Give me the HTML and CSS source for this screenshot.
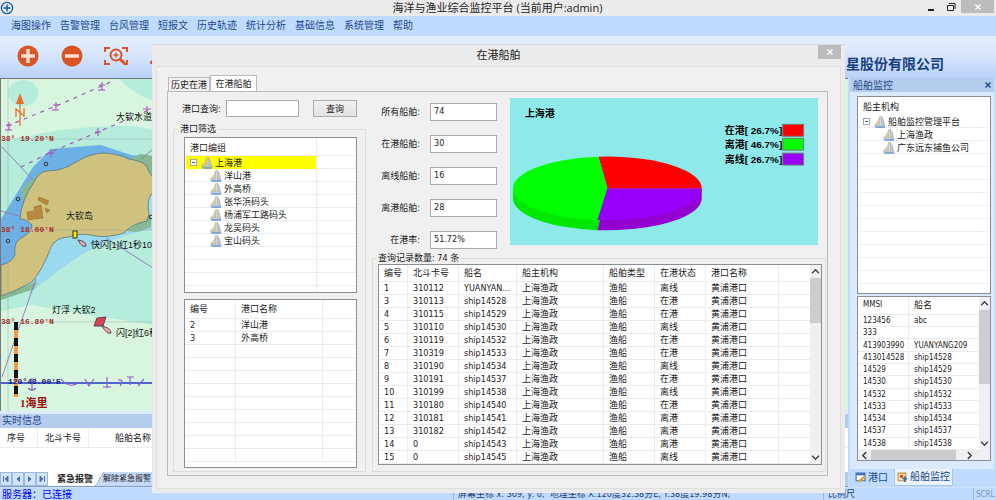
FILE: index.html
```
<!DOCTYPE html>
<html lang="zh-CN">
<head>
<meta charset="UTF-8">
<meta name="viewport" content="width=device-width, initial-scale=1.0">
<title>海洋与渔业综合监控平台</title>
<link rel="stylesheet" href="styles.css">
</head>
<body>

<!-- Shared icons -->
<svg class="defs" width="0" height="0">
  <symbol id="boat" viewBox="0 0 12 12">
    <path d="M 6,0 L 6,9 L 0.500,9 Q 5,5 6,0 Z" fill="#d6cba6" stroke="#b3ac95" stroke-width=".5" />
    <path d="M 7,0 Q 10,3 10.500,9 L 7,9 Z" fill="#c3c9d0" stroke="#9aa3ad" stroke-width=".5" />
    <path d="M 0,9.500 L 12,9.500 L 10.500,12 L 2,12 Z" fill="#86aad3" />
  </symbol>
  <symbol id="cross" viewBox="0 0 8 8">
    <path d="M 1.500,1.500 L 6.500,6.500 M 6.500,1.500 L 1.500,6.500" stroke="currentColor" stroke-width="1.400" />
  </symbol>
  <symbol id="up" viewBox="0 0 8 8">
    <path d="M 1,5.500 L 4,2.500 L 7,5.500" fill="none" stroke="#444" stroke-width="1.300" />
  </symbol>
  <symbol id="down" viewBox="0 0 8 8">
    <path d="M 1,2.500 L 4,5.500 L 7,2.500" fill="none" stroke="#444" stroke-width="1.300" />
  </symbol>
  <symbol id="left" viewBox="0 0 8 8">
    <path d="M 5.500,1 L 2.500,4 L 5.500,7" fill="none" stroke="#444" stroke-width="1.300" />
  </symbol>
  <symbol id="right" viewBox="0 0 8 8">
    <path d="M 2.500,1 L 5.500,4 L 2.500,7" fill="none" stroke="#444" stroke-width="1.300" />
  </symbol>
</svg>

<div class="app">
  <header class="titlebar">
    <svg class="logo" viewBox="0 0 14 14">
      <circle cx="7" cy="7" r="5.600" fill="#e8f1fb" stroke="#1d62b5" stroke-width="1.400" />
      <path d="M 7,3.500 V 10.500 M 3.500,7 H 10.500" stroke="#1d62b5" stroke-width="1.500" />
      <circle cx="7" cy="7" r="1.500" fill="#1d62b5" />
    </svg>
    <h1>海洋与渔业综合监控平台 (当前用户:admin)</h1>
    <div class="win-buttons">
      <button aria-label="最小化"><svg viewBox="0 0 10 10"><path d="M 2,8 H 8" stroke="#222" stroke-width="2" /></svg></button>
      <button aria-label="还原"><svg viewBox="0 0 10 10"><path d="M 1.500,3.500 H 7.500 V 8.500 H 1.500 Z M 3,1.500 H 9 V 7" fill="none" stroke="#222" /></svg></button>
      <button class="close" aria-label="关闭"><svg viewBox="0 0 8 8"><use href="#cross" /></svg></button>
    </div>
  </header>

  <nav class="menu">
    <a href="#">海图操作</a>
    <a href="#">告警管理</a>
    <a href="#">台风管理</a>
    <a href="#">短报文</a>
    <a href="#">历史轨迹</a>
    <a href="#">统计分析</a>
    <a href="#">基础信息</a>
    <a href="#">系统管理</a>
    <a href="#">帮助</a>
  </nav>

  <div class="toolbar">
    <button aria-label="放大">
      <svg viewBox="0 0 24 24"><circle cx="12" cy="12" r="10.500" fill="#db5426" /><path d="M 12,5 V 19 M 5,12 H 19" stroke="#fde3d3" stroke-width="3.400" /></svg>
    </button>
    <button aria-label="缩小">
      <svg viewBox="0 0 24 24"><circle cx="12" cy="12" r="10.500" fill="#db5426" /><path d="M 5,12 H 19" stroke="#fde3d3" stroke-width="3.400" /></svg>
    </button>
    <button aria-label="框选放大">
      <svg viewBox="0 0 24 24" fill="none" stroke="#db5426" stroke-width="2">
        <path d="M 1,8 V 4 H 6 M 18,4 H 23 V 8 M 1,16 V 20 H 6 M 20,20 H 23 V 16" />
        <circle cx="12" cy="11" r="5.500" />
        <path d="M 16,15 L 21,20" stroke-width="3" />
        <path d="M 12,8.500 V 13.500 M 9.500,11 H 14.500" stroke-width="1.500" />
      </svg>
    </button>
    <button aria-label="测距">
      <svg viewBox="0 0 24 24"><path d="M 2,18 L 17,3 L 22,8 L 7,20 L 2,20 Z" fill="#db5426" /></svg>
    </button>
    <strong class="company">星股份有限公司</strong>
  </div>

  <main class="work">
    <section class="chart-side">
      <div class="map">
        <svg width="100%" height="100%">
          <!-- Sea -->
          <rect width="100%" height="100%" fill="#d8f6df" />
          <ellipse cx="22" cy="14" rx="15" ry="13" fill="#b5ecdb" />
          <path d="M 118,0 Q 132,14 152,22 V 0 Z" fill="#b5ecdb" />
          <path d="M 0,64 Q 60,46 130,47 L 152,50 V 246 Q 90,236 30,226 L 0,232 Z" fill="#b5ecdb" />
          <path d="M 28,215 Q 50,196 80,176 Q 110,158 152,150 V 110 L 60,150 L 30,205 Z" fill="#9ad9ee" />
          <path d="M 152,105 V 145 L 144,140 V 115 Z" fill="#a3dfee" />
          <path d="M 0,140 L 32,88 L 50,70 L 100,66 L 130,76 L 152,78 V 100 L 50,150 L 20,195 L 0,218 Z" fill="#6cb0e5" />
          <path d="M 0,215 L 36,203 L 33,210 L 0,221 Z M 20,110 L 42,91 L 34,104 L 22,122 Z M 130,79 L 140,75 L 152,77 V 100 L 142,88 Z M 125,152 L 150,135 V 148 L 136,153 Z" fill="#86b894" />

          <!-- Island -->
          <path d="M 33,103 Q 38,93 46,92 Q 62,92 75,83 Q 90,74 103,74 Q 118,75 128,80 Q 140,82 145,86 Q 148,94 152,98 V 113 Q 145,120 148,135 L 146,142 Q 130,145 123,154 Q 105,159 95,157 Q 80,153 68,158 Q 55,158 50,168 Q 42,190 31,203 Q 15,212 0,217 V 186 Q 10,184 14,176 Q 12,162 22,158 Q 31,153 31,146 Q 24,139 19,140 Q 20,122 33,103 Z" fill="#cfc27f" stroke="#5a7878" stroke-width=".8" />
          <path d="M 38,118 L 48,122 L 46,126 L 37,121 Z M 33,128 L 40,126 L 42,139 L 34,140 Z M 26,133 L 32,132 L 33,140 L 27,141 Z M 44,129 L 49,131 L 46,134 Z" fill="#b98a3c" stroke="#98702b" stroke-width=".6" />

          <!-- Grid and routes -->
          <path d="M 0,60 H 152 M 0,151 H 152 M 0,243 H 152 M 7,0 V 333" stroke="#9ba8a8" stroke-opacity=".5" />
          <path d="M 1,68 L 32,101 M 0,132 L 18,137 M 1,298 L 35,200 M 105,159 L 152,189 M 140,80 L 152,70" fill="none" stroke="#9076b5" stroke-width=".9" />
          <path d="M 6,47 L 55,27 L 112,2 M 20,88 L 50,73 L 97,53 L 150,30" fill="none" stroke="#a15dad" stroke-width="1.200" stroke-dasharray="4 5" />
          <path d="M 5,46 H 11 M 8,43 V 51 M 4,51 H 11 M 52,26 H 58 M 55,23 V 31 M 51,31 H 58 M 98,6 H 104 M 101,3 V 11 M 97,11 H 104 M 47,74 H 53 M 50,70 V 78 M 94,53 H 100 M 97,49 V 57 M 142,30 H 150 M 146,27 V 34" stroke="#b04fc0" stroke-width="1.100" />
          <path d="M 0,304 H 152" stroke="#2233c8" stroke-width="1.500" />
          <path d="M 60,300 Q 68,310 77,304 M 84,300 L 88,307 L 93,300 M 102,308 H 110 M 106,298 V 309 M 117,301 Q 124,300 119,307 M 126,298 H 133 M 129,298 V 306 M 137,307 L 143,300 M 27,309 Q 31,313 35,309 M 31,299 V 311" fill="none" stroke="#8d5dc0" stroke-width="1.200" />

          <!-- Depth marks -->
          <g fill="none" stroke="#333">
            <circle cx="45" cy="85" r="1.800" />
            <circle cx="17" cy="120" r="1.800" />
            <circle cx="7" cy="162" r="1.800" />
            <circle cx="150" cy="138" r="1.800" />
          </g>

          <!-- Buoys -->
          <rect x="72" y="152" width="4" height="7" fill="#ffe600" stroke="#333" />
          <path d="M 77,161 Q 85,162 85,167 Q 81,169 77,161 Z" fill="#eda3b5" stroke="#333" stroke-width=".8" />
          <path d="M 96,239 L 105,238 L 102,247 L 93,247 Z" fill="#d84257" stroke="#333" stroke-width=".8" />
          <path d="M 101,247 Q 110,249 110,254 Q 106,256 101,247 Z" fill="#eda3b5" stroke="#333" stroke-width=".8" />

          <!-- North arrow -->
          <path d="M 19,14 L 23,25 L 15,25 Z" fill="#e8702a" />
          <path d="M 19,25 V 47 M 15,38 V 30 L 23,37 V 29" fill="none" stroke="#e8702a" stroke-width="1.300" />

          <!-- Scale bar -->
          <path d="M 15,243 V 318" stroke="#f09a4a" stroke-width="4" />
          <path d="M 15,243 V 318" stroke="#111" stroke-width="4" stroke-dasharray="8 8" />

          <g class="place">
            <text x="115" y="41">大钦水道</text>
            <text x="65" y="140">大钦岛</text>
            <text x="90" y="169">快闪[1]红1秒10m</text>
            <text x="51" y="234">灯浮 大钦2</text>
            <text x="115" y="257">闪[2]红6秒</text>
          </g>
          <g class="degree">
            <text x="0" y="62">38° 19.20'N</text>
            <text x="0" y="153">38° 18.00'N</text>
            <text x="0" y="245">38° 16.80'N</text>
            <text x="7" y="305" class="lon">120°48.00'E</text>
          </g>
          <text x="19" y="328" class="scale">1海里</text>
        </svg>
      </div>

      <div class="realtime">
        <h2>实时信息</h2>
        <div class="sheet">
          <table>
            <tr><th class="w-38">序号</th><th class="w-52">北斗卡号</th><th class="name">船舶名称</th></tr>
          </table>
        </div>
        <div class="sheet-tabs">
          <button aria-label="第一页"><svg viewBox="0 0 8 8"><path d="M 1.500,1 V 7 M 6,1 L 3,4 L 6,7 Z" fill="#4d76ae" stroke="#4d76ae" /></svg></button>
          <button aria-label="上一页"><svg viewBox="0 0 8 8"><path d="M 5.500,1.500 L 3,4 L 5.500,6.500 Z" fill="#4d76ae" stroke="#4d76ae" /></svg></button>
          <button aria-label="下一页"><svg viewBox="0 0 8 8"><path d="M 2.500,1.500 L 5,4 L 2.500,6.500 Z" fill="#4d76ae" stroke="#4d76ae" /></svg></button>
          <button aria-label="最后页"><svg viewBox="0 0 8 8"><path d="M 6.500,1 V 7 M 2,1 L 5,4 L 2,7 Z" fill="#4d76ae" stroke="#4d76ae" /></svg></button>
          <a href="#" class="current">紧急报警</a>
          <a href="#" class="other">解除紧急报警</a>
        </div>
      </div>
    </section>

    <aside class="dock">
      <div class="dock-body">
        <h2>船舶监控 <svg viewBox="0 0 8 8"><use href="#cross" /></svg></h2>
        <div class="list-box org">
          <p class="tree-head">船主机构</p>
          <ul class="tree">
            <li><span class="toggle"></span><svg><use href="#boat" /></svg>船舶监控管理平台</li>
            <li class="child"><svg><use href="#boat" /></svg>上海渔政</li>
            <li class="child"><svg><use href="#boat" /></svg>广东远东捕鱼公司</li>
          </ul>
        </div>
        <div class="list-box ships">
          <div class="with-scroll">
            <table class="ship-table">
              <thead><tr><th>MMSI</th><th>船名</th></tr></thead>
              <tbody>
                <tr><td>123456</td><td>abc</td></tr>
                <tr><td>333</td><td></td></tr>
                <tr><td>413903990</td><td>YUANYANG209</td></tr>
                <tr><td>413014528</td><td>ship14528</td></tr>
                <tr><td>14529</td><td>ship14529</td></tr>
                <tr><td>14530</td><td>ship14530</td></tr>
                <tr><td>14532</td><td>ship14532</td></tr>
                <tr><td>14533</td><td>ship14533</td></tr>
                <tr><td>14534</td><td>ship14534</td></tr>
                <tr><td>14537</td><td>ship14537</td></tr>
                <tr><td>14538</td><td>ship14538</td></tr>
              </tbody>
            </table>
            <div class="vscroll"><svg><use href="#up" /></svg><i class="thumb long"></i><svg><use href="#down" /></svg></div>
          </div>
          <div class="hscroll"><svg><use href="#left" /></svg><i class="thumb"></i><svg><use href="#right" /></svg></div>
        </div>
      </div>
      <div class="dock-tabs">
        <a href="#"><svg viewBox="0 0 10 10"><path d="M 1,1 H 9 V 8 H 1 Z" fill="#fff" stroke="#3a6fb5" /><path d="M 1,2 H 9" stroke="#3a6fb5" stroke-width="2" /><path d="M 3,9 L 9,4" stroke="#e0a030" stroke-width="2" /></svg>港口</a>
        <a href="#" class="current"><svg viewBox="0 0 10 10"><path d="M 1,1 H 8 V 8 H 1 Z" fill="#ffe9b0" stroke="#d08a30" /><circle cx="4" cy="4" r="1.500" fill="#d9482b" /><path d="M 5,6 H 9 M 7,4 V 9" stroke="#3a6fb5" stroke-width="1.500" /></svg>船舶监控</a>
      </div>
    </aside>
  </main>

  <footer class="status">
    <span class="server">服务器：已连接</span>
    <span class="coords">屏幕坐标 x: 369, y: 0;&nbsp; 地理坐标 X:120度32.38分E, Y:38度19.98分N;</span>
    <span class="ratio">比例尺</span>
    <span class="scrl">SCRL</span>
  </footer>
</div>

<!-- Ships in port window -->
<div class="dialog" role="dialog" aria-labelledby="dialog-title">
  <div class="dialog-title">
    <h2 id="dialog-title">在港船舶</h2>
    <button aria-label="关闭窗口"><svg viewBox="0 0 8 8"><use href="#cross" /></svg></button>
  </div>
  <div class="dialog-body">
    <div class="tabs">
      <button>历史在港</button>
      <button class="active">在港船舶</button>
    </div>
    <div class="tab-panel">
      <div class="filter">
        <form class="search">
          <label for="port">港口查询:</label>
          <input id="port" type="text">
          <button type="button">查询</button>
        </form>
        <fieldset class="filter-group">
          <legend>港口筛选</legend>
          <div class="list-box ports">
            <p class="tree-head">港口编组</p>
            <ul class="tree">
              <li class="selected"><span class="toggle"></span><svg><use href="#boat" /></svg>上海港</li>
              <li class="child"><svg><use href="#boat" /></svg>洋山港</li>
              <li class="child"><svg><use href="#boat" /></svg>外高桥</li>
              <li class="child"><svg><use href="#boat" /></svg>张华浜码头</li>
              <li class="child"><svg><use href="#boat" /></svg>杨浦军工路码头</li>
              <li class="child"><svg><use href="#boat" /></svg>龙吴码头</li>
              <li class="child"><svg><use href="#boat" /></svg>宝山码头</li>
            </ul>
          </div>
          <div class="list-box port-list">
            <table>
              <thead><tr><th class="w-52">编号</th><th class="w-87">港口名称</th><th></th></tr></thead>
              <tbody>
                <tr><td>2</td><td>洋山港</td><td></td></tr>
                <tr><td>3</td><td>外高桥</td><td></td></tr>
                <tr><td></td><td></td><td></td></tr>
                <tr><td></td><td></td><td></td></tr>
                <tr><td></td><td></td><td></td></tr>
                <tr><td></td><td></td><td></td></tr>
                <tr><td></td><td></td><td></td></tr>
                <tr><td></td><td></td><td></td></tr>
                <tr><td></td><td></td><td></td></tr>
                <tr><td></td><td></td><td></td></tr>
                <tr><td></td><td></td><td></td></tr>
              </tbody>
            </table>
          </div>
        </fieldset>
      </div>

      <div class="result">
        <div class="summary">
          <div class="fields">
            <label for="all">所有船舶:</label><input id="all" type="text" value="74">
            <label for="in">在港船舶:</label><input id="in" type="text" value="30">
            <label for="off">离线船舶:</label><input id="off" type="text" value="16">
            <label for="out">离港船舶:</label><input id="out" type="text" value="28">
            <label for="rate">在港率:</label><input id="rate" type="text" value="51.72%">
          </div>
          <div class="pie">
            <svg viewBox="0 0 310 147" preserveAspectRatio="xMinYMin meet">
              <!-- Sides -->
              <path d="M 3,91 V 101 A 95,32 0 0 0 88,133 L 98,91 Z" fill="#00e800" />
              <path d="M 193,91 V 101 A 95,32 0 0 1 98,133 H 88 L 98,91 Z" fill="#9400d0" />
              <!-- Slices -->
              <path d="M 98,91 L 193,91 A 95,32 0 0 0 98,59 L 89,59.100 Z" fill="#f00" />
              <path d="M 98,91 L 89,59.100 A 95,32 0 0 0 3,91 A 95,32 0 0 0 88,122.800 Z" fill="#0f0" />
              <path d="M 98,91 L 88,122.800 L 98,123 A 95,32 0 0 0 193,91 Z" fill="#9600fa" />
              <text x="15" y="19">上海港</text>
              <text x="274" y="36" text-anchor="end">在港[ 26.7%]</text>
              <text x="274" y="50" text-anchor="end">离港[ 46.7%]</text>
              <text x="274" y="65" text-anchor="end">离线[ 26.7%]</text>
              <rect x="274.500" y="26.500" width="21" height="12" fill="#f00" stroke="#777" />
              <rect x="274.500" y="40.500" width="21" height="12" fill="#0f0" stroke="#777" />
              <rect x="274.500" y="55.500" width="21" height="12" fill="#9600fa" stroke="#777" />
            </svg>
          </div>
        </div>

        <fieldset class="records">
          <legend>查询记录数量: 74 条</legend>
          <div class="list-box with-scroll">
            <table>
              <thead>
                <tr><th class="w-29">编号</th><th class="w-52">北斗卡号</th><th class="w-58">船名</th><th class="w-87">船主机构</th><th class="w-52">船舶类型</th><th class="w-52">在港状态</th><th class="w-73">港口名称</th><th></th></tr>
              </thead>
              <tbody>
                <tr><td>1</td><td>310112</td><td>YUANYAN...</td><td>上海渔政</td><td>渔船</td><td>离线</td><td>黄浦港口</td><td></td></tr>
                <tr><td>3</td><td>310113</td><td>ship14528</td><td>上海渔政</td><td>渔船</td><td>在港</td><td>黄浦港口</td><td></td></tr>
                <tr><td>4</td><td>310115</td><td>ship14529</td><td>上海渔政</td><td>渔船</td><td>在港</td><td>黄浦港口</td><td></td></tr>
                <tr><td>5</td><td>310110</td><td>ship14530</td><td>上海渔政</td><td>渔船</td><td>离线</td><td>黄浦港口</td><td></td></tr>
                <tr><td>6</td><td>310119</td><td>ship14532</td><td>上海渔政</td><td>渔船</td><td>在港</td><td>黄浦港口</td><td></td></tr>
                <tr><td>7</td><td>310319</td><td>ship14533</td><td>上海渔政</td><td>渔船</td><td>在港</td><td>黄浦港口</td><td></td></tr>
                <tr><td>8</td><td>310190</td><td>ship14534</td><td>上海渔政</td><td>渔船</td><td>离线</td><td>黄浦港口</td><td></td></tr>
                <tr><td>9</td><td>310191</td><td>ship14537</td><td>上海渔政</td><td>渔船</td><td>在港</td><td>黄浦港口</td><td></td></tr>
                <tr><td>10</td><td>310199</td><td>ship14538</td><td>上海渔政</td><td>渔船</td><td>离线</td><td>黄浦港口</td><td></td></tr>
                <tr><td>11</td><td>310180</td><td>ship14540</td><td>上海渔政</td><td>渔船</td><td>在港</td><td>黄浦港口</td><td></td></tr>
                <tr><td>12</td><td>310181</td><td>ship14541</td><td>上海渔政</td><td>渔船</td><td>离港</td><td>黄浦港口</td><td></td></tr>
                <tr><td>13</td><td>310182</td><td>ship14542</td><td>上海渔政</td><td>渔船</td><td>离港</td><td>黄浦港口</td><td></td></tr>
                <tr><td>14</td><td>0</td><td>ship14543</td><td>上海渔政</td><td>渔船</td><td>离港</td><td>黄浦港口</td><td></td></tr>
                <tr><td>15</td><td>0</td><td>ship14545</td><td>上海渔政</td><td>渔船</td><td>离线</td><td>黄浦港口</td><td></td></tr>
              </tbody>
            </table>
            <div class="vscroll"><svg><use href="#up" /></svg><i class="thumb"></i><svg><use href="#down" /></svg></div>
          </div>
        </fieldset>
      </div>
    </div>
  </div>
</div>

</body>
</html>
```
FILE: styles.css
```
* {
  box-sizing: border-box;
}

body {
  margin: 0;
  position: relative;
  font-family: "DejaVu Sans Condensed", "Noto Sans CJK SC", sans-serif;
  font-size: 9px;
  line-height: 12px;
  color: #222;
}

h1, h2, p, ul {
  margin: 0;
  padding: 0;
  font-weight: normal;
  list-style: none;
}

a {
  color: inherit;
  text-decoration: none;
}

button, input {
  margin: 0;
  padding: 0;
  border: 0;
  background: none;
  font: inherit;
  color: inherit;
}

button svg {
  display: block;
  margin: auto;
}

fieldset {
  margin: 0;
  min-width: 0;
  border: 1px solid #dcdcdc;
}

legend {
  padding: 0 2px;
}

.defs {
  position: absolute;
}

/* Main window */

.app {
  display: flex;
  flex-direction: column;
  height: 100vh;
  background: #bfdbff;
}

.titlebar {
  display: flex;
  align-items: center;
  height: 16px;
  background: #ebebeb;
}

.titlebar .logo {
  width: 14px;
  height: 14px;
}

.titlebar h1 {
  flex: 1;
  padding-left: 60px;
  text-align: center;
  font-family: "Open Sans", "Noto Sans CJK SC", sans-serif;
  font-size: 11px;
  line-height: 16px;
}

.win-buttons {
  display: flex;
  align-self: flex-start;
  padding-right: 2px;
}

.win-buttons button {
  width: 20px;
  height: 13px;
}

.win-buttons svg {
  width: 10px;
  height: 10px;
}

.win-buttons .close {
  width: 33px;
  background: #bcbcbc;
  color: #fff;
}

.win-buttons .close svg {
  width: 8px;
  height: 8px;
}

.menu {
  display: flex;
  gap: 9px;
  height: 20px;
  padding-left: 11px;
  font-size: 10px;
  line-height: 20px;
  color: #1e4a8c;
}

.toolbar {
  display: flex;
  align-items: center;
  gap: 20px;
  height: 42px;
  padding: 0 52px 2px 16px;
  background: linear-gradient(#e3effe, #dce9fd 35%, #b9d2f8);
}

.toolbar button {
  width: 24px;
}

.toolbar svg {
  width: 24px;
  height: 24px;
}

.company {
  margin-left: auto;
  padding-top: 16px;
  font-size: 14px;
  line-height: 20px;
  color: #173f80;
}

.work {
  display: flex;
  flex: 1;
  min-height: 0;
}

.chart-side {
  display: flex;
  flex: 1;
  flex-direction: column;
  min-width: 0;
}

.map {
  flex: 1;
  min-height: 0;
  border-top: 1px solid #777;
  border-left: 1px solid #777;
  overflow: hidden;
}

.map svg {
  display: block;
}

.place {
  font-family: "Liberation Sans", "Noto Sans CJK SC", sans-serif;
  font-size: 9px;
  fill: #111;
}

.degree {
  font-family: "Liberation Mono", monospace;
  font-size: 8px;
  font-weight: bold;
  fill: #a83030;
}

.degree .lon {
  fill: #1c1c88;
}

.scale {
  font-family: "Liberation Serif", "Noto Sans CJK SC", serif;
  font-size: 11px;
  font-weight: bold;
  fill: #a01010;
}

.realtime {
  height: 76px;
  padding-top: 3px;
  display: flex;
  flex-direction: column;
  background: #dceafd;
}

.realtime h2 {
  height: 14px;
  padding-left: 2px;
  font-size: 10px;
  line-height: 13px;
  color: #1e4a8c;
  background: #b5cdec;
}

.sheet {
  flex: 1;
  background: #fff;
}

.realtime th {
  height: 20px;
  padding-left: 7px;
}

.realtime .name {
  padding-left: 26px;
}

.sheet-tabs {
  display: flex;
  height: 15px;
  background: #b5cdec;
  border-bottom: 1px solid #7d9fcf;
}

.sheet-tabs button {
  width: 12px;
  border: 1px solid #9db9df;
  background: #d3e3f8;
}

.sheet-tabs button svg {
  width: 8px;
  height: 8px;
}

.sheet-tabs a {
  line-height: 14px;
}

.sheet-tabs .current {
  width: 46px;
  padding-left: 9px;
  font-weight: bold;
  background: #fff;
  white-space: nowrap;
}

.sheet-tabs .other {
  padding: 0 8px 0 9px;
  font-size: 8px;
  background: linear-gradient(120deg, #fff 8px, #7d9fcf 8px, #c5daf6 9px);
}

.status {
  display: flex;
  height: 13px;
  overflow: hidden;
  line-height: 13px;
  white-space: nowrap;
  color: #1e3a70;
  border-top: 1px solid #cfe1fb;
}

.server {
  width: 453px;
  padding-left: 2px;
  font-size: 10px;
  color: #00f;
}

.coords {
  flex: 1;
  padding-left: 4px;
  border-left: 1px solid #9db9df;
}

.ratio {
  width: 150px;
  padding-left: 4px;
  border-left: 1px solid #9db9df;
}

.scrl {
  width: 23px;
  padding-left: 2px;
  font-size: 8px;
  color: #8096b8;
  border-left: 1px solid #9db9df;
}

/* Lists */

.list-box {
  border: 1px solid #8b8e94;
  background: #fff;
  overflow: hidden;
}

table {
  width: 100%;
  table-layout: fixed;
  border-collapse: separate;
  border-spacing: 0;
}

th, td {
  height: 13px;
  padding: 0 0 0 5px;
  border-right: 1px solid #ececec;
  border-bottom: 1px solid #ececec;
  font-weight: normal;
  text-align: left;
  line-height: 12px;
  white-space: nowrap;
}

th:last-child, td:last-child {
  border-right: 0;
}

.w-29 { width: 29px; }
.w-38 { width: 38px; }
.w-52 { width: 51px; }
.w-58 { width: 58px; }
.w-73 { width: 73px; }
.w-87 { width: 87px; }

.tree-head {
  height: 18px;
  padding: 4px 0 0 5px;
}

.tree li {
  display: flex;
  align-items: center;
  height: 13px;
  padding-left: 5px;
  white-space: nowrap;
}

.tree li.child {
  padding-left: 25px;
}

.tree svg {
  flex: none;
  width: 12px;
  height: 12px;
  margin-right: 2px;
}

.toggle {
  width: 7px;
  height: 7px;
  margin-right: 4px;
  border: 1px solid #9aa9bf;
  background: linear-gradient(#456, #456) center / 3px 1px no-repeat #fff;
}

.with-scroll {
  display: flex;
}

.vscroll, .hscroll {
  display: flex;
  flex: none;
  background: #f0f0f0;
}

.vscroll {
  flex-direction: column;
  width: 11px;
}

.vscroll svg, .hscroll svg {
  width: 9px;
  height: 9px;
  margin: 2px 1px;
}

.vscroll .thumb {
  height: 45px;
  margin-bottom: auto;
  background: #cdcdcd;
}

.vscroll .long {
  height: 74px;
}

/* Right dock */

.dock {
  display: flex;
  flex-direction: column;
  width: 148px;
}

.dock-body {
  display: flex;
  flex: 1;
  flex-direction: column;
  gap: 2px;
  min-height: 0;
  margin: 0 2px;
  padding: 0 3px 8px 7px;
  background: #dbe9fc;
}

.dock h2 {
  display: flex;
  align-items: center;
  justify-content: space-between;
  height: 14px;
  margin: 0 -3px 2px -7px;
  padding: 0 2px 0 3px;
  font-size: 10px;
  line-height: 13px;
  color: #1e4a8c;
  background: #b5cdec;
}

.dock h2 svg {
  width: 8px;
  height: 8px;
}

.org {
  flex: 6;
  min-height: 0;
  background: repeating-linear-gradient(#fff 0 12px, #eee 12px 13px) 0 5px;
}

.org .tree-head {
  background: #fff;
}

.ships {
  display: flex;
  flex: 5;
  flex-direction: column;
  min-height: 0;
}

.ships .with-scroll {
  flex: 1;
  min-height: 0;
}

.ship-table {
  height: 100%;
  font-size: 8px;
}

.ship-table th {
  height: 18px;
}

.ship-table td {
  height: 12px;
  line-height: 11px;
}

.ship-table th:last-child {
  font-size: 9px;
}

.ship-table th:first-child {
  width: 51px;
}

.hscroll {
  height: 10px;
}

.hscroll svg {
  margin: 1px 2px;
}

.hscroll .thumb {
  width: 85px;
  background: #cdcdcd;
}

.hscroll svg:last-child {
  margin-left: 9px;
}

.dock-tabs {
  display: flex;
  gap: 4px;
  height: 18px;
  padding-left: 5px;
  font-size: 10px;
  line-height: 16px;
  color: #1e4a8c;
}

.dock-tabs a {
  display: flex;
  align-items: center;
  gap: 2px;
  height: 17px;
  padding: 0 2px;
}

.dock-tabs svg {
  width: 11px;
  height: 11px;
}

.dock-tabs .current {
  border: 1px solid #a9c3e8;
  border-top: 0;
  background: #eaf2fd;
}

/* Dialog window */

.dialog {
  position: absolute;
  top: 44px;
  right: 151px;
  bottom: 7px;
  left: 152px;
  display: flex;
  flex-direction: column;
  padding: 0 4px 4px;
  background: #ebebeb;
  border-top: 1px solid #d8d8d8;
}

.dialog-title {
  display: flex;
  align-items: flex-start;
  height: 21px;
}

.dialog-title h2 {
  flex: 1;
  padding-left: 23px;
  text-align: center;
  font-size: 11px;
  line-height: 21px;
}

.dialog-title button {
  width: 23px;
  height: 14px;
  background: #bcbcbc;
  color: #fff;
}

.dialog-title svg {
  width: 8px;
  height: 8px;
}

.dialog-body {
  display: flex;
  flex: 1;
  flex-direction: column;
  min-height: 0;
  padding: 8px 12px 12px 10px;
  border: 1px solid #dedede;
  background: #f0f0f0;
}

.tabs {
  display: flex;
  align-items: flex-end;
  height: 16px;
  padding-left: 1px;
}

.tabs button {
  width: 42px;
  height: 14px;
  border: 1px solid #bbb;
  border-bottom: 0;
}

.tabs .active {
  width: 47px;
  height: 16px;
  background: #fff;
}

.tab-panel {
  display: flex;
  flex: 1;
  gap: 6px;
  min-height: 0;
  padding: 6px 1px 3px 5px;
  border: 1px solid #bbb;
}

.filter {
  display: flex;
  flex-direction: column;
  width: 193px;
}

.search {
  display: flex;
  align-items: center;
  height: 19px;
  margin-bottom: 6px;
  padding: 2px 9px 0;
}

.search input {
  width: 73px;
  height: 17px;
  margin-left: 5px;
  border: 1px solid #ababab;
  background: #fff;
}

.search button {
  width: 44px;
  height: 17px;
  margin-left: auto;
  border: 1px solid #acacac;
  background: linear-gradient(#f0f0f0, #e3e3e3);
}

.filter-group {
  display: flex;
  flex: 1;
  flex-direction: column;
  gap: 6px;
  min-height: 0;
  padding: 2px 8px 3px 10px;
}

.filter-group legend {
  margin-left: -6px;
}

.ports {
  flex: none;
  height: 156px;
  padding: 0 1px;
  background: linear-gradient(90deg, transparent 131px, #ececec 131px, #ececec 132px, transparent 132px), repeating-linear-gradient(#fff 0 12px, #eee 12px 13px) 0 5px;
}

.ports .tree-head {
  padding-left: 4px;
}

.ports .tree li {
  padding-left: 4px;
}

.ports .tree li.child {
  padding-left: 24px;
}

.ports .tree .selected {
  width: 130px;
  background: #ff0;
}

.port-list {
  flex: 1;
  min-height: 0;
}

.port-list thead th {
  height: 19px;
}

.result {
  display: flex;
  flex: 1;
  flex-direction: column;
  gap: 3px;
  min-width: 0;
}

.summary {
  display: flex;
  gap: 13px;
  padding-right: 8px;
}

.fields {
  display: grid;
  grid-template-columns: 48px 67px;
  gap: 14px 10px;
  align-content: start;
  padding-top: 5px;
}

.fields label {
  text-align: right;
  line-height: 18px;
}

.fields input {
  width: 67px;
  height: 18px;
  padding: 0 0 2px 3px;
  border: 1px solid #ababab;
  background: #fff;
}

.pie {
  flex: 1;
  height: 147px;
  background: #8eeaea;
}

.pie svg {
  display: block;
  width: 100%;
  height: 147px;
}

.pie text {
  font-family: "Liberation Sans", "Noto Sans CJK SC", sans-serif;
  font-size: 10px;
  font-weight: bold;
  fill: #000;
}

.records {
  display: flex;
  flex: 1;
  min-height: 0;
  padding: 0 3px 6px 5px;
}

.records legend {
  margin-left: -2px;
}

.records .list-box {
  flex: 1;
  min-width: 0;
}

.records table {
  flex: 1;
  min-width: 0;
  height: 100%;
}

.records thead th {
  height: 17px;
}
```
